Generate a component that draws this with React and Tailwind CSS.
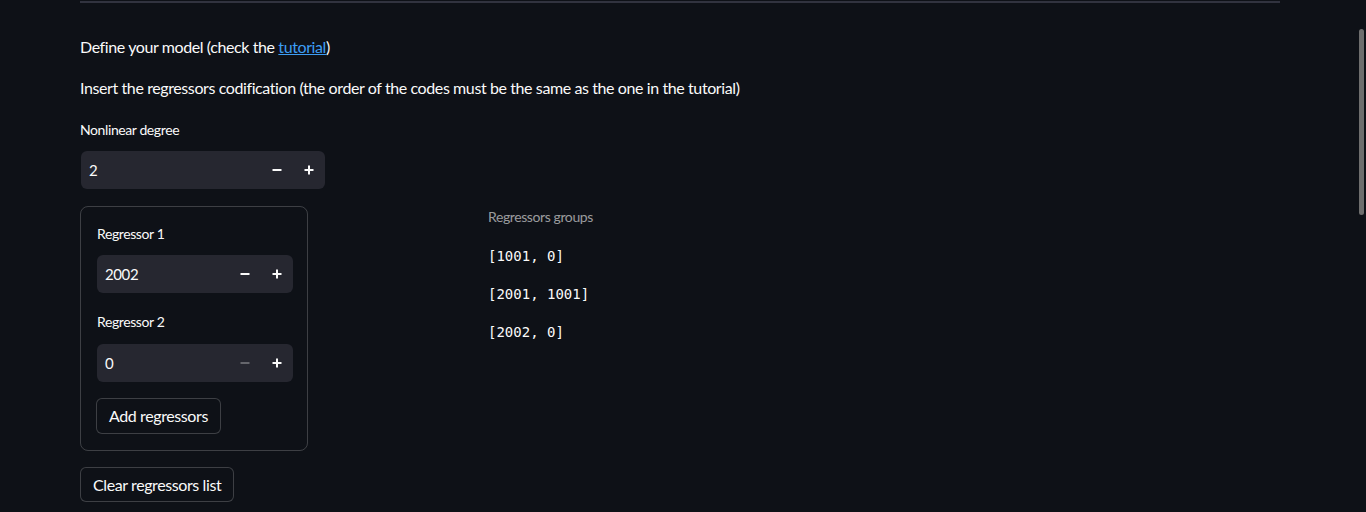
import React from 'react';

const font = { fontFamily: 'Lato, "Noto Sans", sans-serif' };

const NumberInput = ({ value, minusDisabled, width }) => (
    <div className={`flex items-center h-[38px] bg-[#262730] rounded-md ${width}`}>
        <span className="flex-1 pl-2 text-[15px] text-[#fafafa]">{value}</span>
        <button className={`w-8 h-full flex items-center justify-center ${minusDisabled ? 'text-[#fafafa]/30' : 'text-[#fafafa]'}`}>
            <svg width="10" height="10" viewBox="0 0 10 10"><rect x="0.5" y="4" width="9" height="2" fill="currentColor" /></svg>
        </button>
        <button className="w-8 h-full flex items-center justify-center text-[#fafafa]">
            <svg width="10" height="10" viewBox="0 0 10 10"><rect x="0.5" y="4" width="9" height="2" fill="currentColor" /><rect x="4" y="0.5" width="2" height="9" fill="currentColor" /></svg>
        </button>
    </div>
);

const App = () => {
    return (
        <div className="relative h-[512px] overflow-hidden bg-[#0e1117] text-[#fafafa] tracking-[-0.025em]" style={font}>
            <div className="w-[1200px] ml-[80px]">
                <div className="h-[2px] mt-px bg-[#31333f]"></div>

                <p className="mt-[32px] text-[16px] leading-6">
                    Define your model (check the <a href="#" className="text-[#3d9df3] underline">tutorial</a>)
                </p>
                <p className="mt-[17px] text-[16px] leading-6">
                    Insert the regressors codification (the order of the codes must be the same as the one in the tutorial)
                </p>

                <label className="block mt-[20px] text-[14px] leading-5">Nonlinear degree</label>
                <div className="mt-[11px] ml-px">
                    <NumberInput value="2" width="w-[244px]" />
                </div>

                <div className="flex mt-[17px]">
                    <div className="w-[408px]">
                        <div className="w-[228px] border border-[#fafafa]/20 rounded-lg px-4 pt-[17px] pb-[16px]">
                            <label className="block text-[14px] leading-5">Regressor 1</label>
                            <div className="mt-[11px]">
                                <NumberInput value="2002" width="w-[196px]" />
                            </div>
                            <label className="block mt-[19px] text-[14px] leading-5">Regressor 2</label>
                            <div className="mt-[12px]">
                                <NumberInput value="0" minusDisabled width="w-[196px]" />
                            </div>
                            <button className="mt-[16px] -ml-px h-[36px] px-3 border border-[#fafafa]/20 rounded-md bg-[#0e1117] text-[16px]">
                                Add regressors
                            </button>
                        </div>
                        <button className="mt-4 h-[35px] px-3 border border-[#fafafa]/20 rounded-md bg-[#0e1117] text-[16px]">
                            Clear regressors list
                        </button>
                    </div>

                    <div className="pt-[1px]">
                        <p className="text-[14px] leading-5 text-[#fafafa]/60">Regressors groups</p>
                        <div className="mt-[19px] flex flex-col gap-[18px] text-[14px] leading-5 tracking-normal" style={{ fontFamily: '"DejaVu Sans Mono", monospace' }}>
                            <span>[1001, 0]</span>
                            <span>[2001, 1001]</span>
                            <span>[2002, 0]</span>
                        </div>
                    </div>
                </div>
            </div>

            <div className="absolute right-[2px] top-[29px] w-[5px] h-[186px] rounded-full bg-[#6e6e6e]"></div>
        </div>
    );
};

export default App;
